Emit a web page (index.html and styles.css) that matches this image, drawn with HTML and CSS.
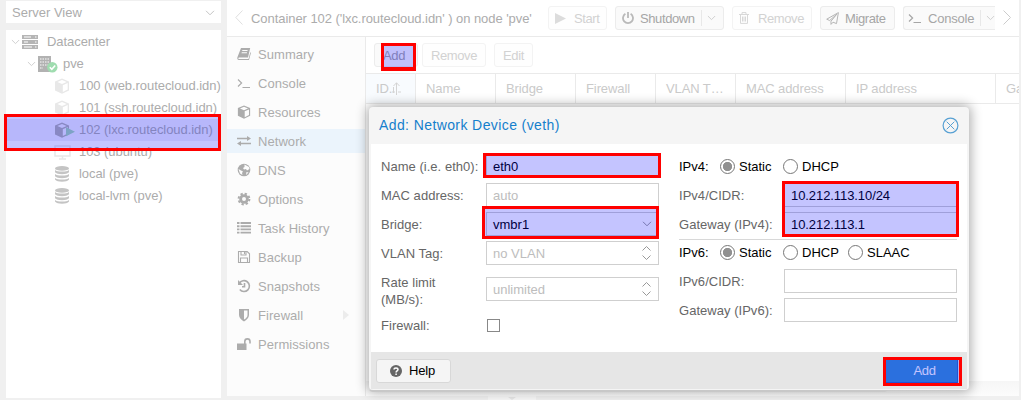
FILE: index.html
```html
<!DOCTYPE html>
<html lang="en">
<head>
<meta charset="utf-8">
<title>Container 102 - Network</title>
<link rel="stylesheet" href="styles.css">
</head>
<body>
<svg class="defs" aria-hidden="true">
  <symbol id="down" viewBox="0 0 10 6"><path d="M1 .8 5 4.8 9 .8" fill="none" stroke="currentColor"/></symbol>
  <symbol id="cube" viewBox="0 0 16 16"><path fill="currentColor" fill-rule="evenodd" d="M8 .6 15 3.4V12.4L8 15.8 1 12.4V3.4ZM8 2 3.4 4 8 6 12.600 4ZM8.800 7.200V13.900L13.700 11.500V5.100Z"/></symbol>
  <symbol id="db" viewBox="0 0 14 16"><g fill="currentColor"><ellipse cx="7" cy="2.400" rx="7" ry="2.400"/><path d="M0 4c2 2 12 2 14 0v2.200c-2 2.600-12 2.600-14 0zM0 8c2 2 12 2 14 0v2.200c-2 2.600-12 2.600-14 0zM0 12c2 2 12 2 14 0v1.500c-2 3-12 3-14 0z"/></g></symbol>
  <symbol id="term" viewBox="0 0 14 14"><path d="M1 3.500 4.600 7 1 10.500M5.500 11.500H13" fill="none" stroke="currentColor" stroke-width="1.200"/></symbol>
</svg>
<div class="app">
  <aside class="side">
    <div class="view">Server View<svg class="chev" width="10" height="6"><use href="#down"/></svg></div>
    <div class="tree">
      <div class="node l0"><svg class="arrow" width="9" height="6" viewBox="0 0 10 6"><use href="#down"/></svg>
        <svg class="ico" width="16" height="14" viewBox="0 0 16 14"><path fill="#b5b5b5" d="M0 0h16v4H0zM0 5h16v4H0zM0 10h16v4H0z"/><path stroke="#fff" d="M2 2h7M2 7h4M2 12h8M13 2h1.500M13 7h1.500M13 12h1.500"/></svg><span>Datacenter</span></div>
      <div class="node l1"><svg class="arrow" width="9" height="6" viewBox="0 0 10 6"><use href="#down"/></svg>
        <svg class="ico" width="20" height="17" viewBox="0 0 20 17"><path fill="#b2b2b2" d="M0 0h13v16H0z"/><path stroke="#e4e4e4" stroke-width="1.300" stroke-dasharray="1.500 1" d="M2 3h9.500M2 6h9.500M2 9h9.500M2 12h3"/><circle cx="14.300" cy="11.300" r="5.200" fill="#9fdcaf"/><path d="m11.800 11.300 2 2 3.400-3.800" fill="none" stroke="#fff" stroke-width="1.600"/></svg><span>pve</span></div>
      <div class="node l2 dim"><svg class="ico" width="16" height="16"><use href="#cube"/></svg><span>100 (web.routecloud.idn)</span></div>
      <div class="node l2 dim"><svg class="ico" width="16" height="16"><use href="#cube"/></svg><span>101 (ssh.routecloud.idn)</span></div>
      <div class="node l2 sel"><svg class="ico run" width="22" height="16" viewBox="0 0 22 16"><use href="#cube" width="16" height="16"/><path fill="#a3d5b4" d="M12 5.200 21 9.700 12 14.200z"/></svg><span>102 (lxc.routecloud.idn)</span></div>
      <div class="node l2 dim"><svg class="ico" width="17" height="15" viewBox="0 0 17 15"><path fill="none" stroke="currentColor" stroke-width="1.500" d="M1 1h15v10H1zM8.500 11v2.500M5 14h7"/></svg><span>103 (ubuntu)</span></div>
      <div class="node l2 store"><svg class="ico" width="14" height="16"><use href="#db"/></svg><span>local (pve)</span></div>
      <div class="node l2 store"><svg class="ico" width="14" height="16"><use href="#db"/></svg><span>local-lvm (pve)</span></div>
    </div>
  </aside>
  <main class="main">
    <header class="head">
      <svg class="back" width="8" height="15" viewBox="0 0 8 15"><path d="M7.500.5.800 7.500l6.700 7" fill="none" stroke="#dfdfdf"/></svg>
      <h1 class="title">Container 102 ('lxc.routecloud.idn' ) on node 'pve'</h1>
      <button class="btn start off"><svg width="11" height="11" viewBox="0 0 11 11"><path fill="#dcdcdc" d="M0 0 11 5.500 0 11z"/></svg>Start</button>
      <button class="btn shut"><svg width="12" height="12" viewBox="0 0 12 12"><path d="M3.400 1.800A5 5 0 1 0 8.600 1.800M6 0v6" fill="none" stroke="#b9b9b9" stroke-width="1.800"/></svg>Shutdown<span class="split"><svg width="9" height="6" viewBox="0 0 10 6"><use href="#down"/></svg></span></button>
      <button class="btn rem off"><svg width="10" height="12" viewBox="0 0 10 12"><path d="M0 2.500h10M3 2V.6h4V2M1.500 3v8.400h7V3M3.500 4.500v5M5 4.500v5M6.500 4.500v5" fill="none" stroke="#d8d8d8"/></svg>Remove</button>
      <button class="btn mig"><svg width="13" height="13" viewBox="0 0 13 13"><path d="M12.400.600.700 7.200 3.700 8.500 10.800 2.200 5 9.200v3.200l2-2.200 3.500 1.400z" fill="none" stroke="#b5b5b5" stroke-linejoin="round"/></svg>Migrate</button>
      <button class="btn con"><svg width="14" height="14"><use href="#term"/></svg>Console<span class="split"><svg width="9" height="6" viewBox="0 0 10 6"><use href="#down"/></svg></span></button>
      <svg class="fwd" width="8" height="15" viewBox="0 0 8 15"><path d="M.5.500 7.500 7.500l-7 7" fill="none" stroke="#ccc"/></svg>
    </header>
    <div class="work">
      <nav class="nav">
        <a class="item"><svg viewBox="0 0 14 14"><path fill="currentColor" fill-rule="evenodd" d="M4 1h9.200L11 10.500H2.200C1 10.500 1 12 2 12H11.500L13.400 5 13.900 6 12 13H2C.300 13 0 11.500.500 10ZM5.400 3 5.100 4H10.400L10.700 3ZM4.800 5.200 4.500 6.200H9.800L10.100 5.200Z"/></svg>Summary</a>
        <a class="item"><svg><use href="#term"/></svg>Console</a>
        <a class="item"><svg><use href="#cube"/></svg>Resources</a>
        <a class="item on"><svg viewBox="0 0 14 14"><path fill="currentColor" d="M0 3.700h10V2l4 2.500L10 7V5.300H0zM14 8.700H4V7L0 9.500 4 12v-1.700h10z"/></svg>Network</a>
        <a class="item"><svg viewBox="0 0 14 14"><circle cx="7" cy="7" r="6.300" fill="currentColor"/><path fill="#fcfcfc" d="M7.500 1.500 12 4 12.500 6 10 7.500 9 6 7 6.500 6 5 7.500 4ZM1.500 6 4 7.500 6 8.500 5 10 5.500 12 3 10.500ZM9.500 9l2 .500L9 12z"/></svg>DNS</a>
        <a class="item"><svg viewBox="0 0 14 14"><circle cx="7" cy="7" r="3.400" fill="none" stroke="currentColor" stroke-width="2.800"/><circle cx="7" cy="7" r="5.400" fill="none" stroke="currentColor" stroke-width="2" stroke-dasharray="2.300 1.941"/></svg>Options</a>
        <a class="item"><svg viewBox="0 0 14 14"><path d="M0 2h2.500M3.500 2H14M0 5.200h2.500M3.500 5.200H14M0 8.400h2.500M3.500 8.400H14M0 11.600h2.500M3.500 11.600H14" stroke="currentColor" stroke-width="1.900"/></svg>Task History</a>
        <a class="item"><svg viewBox="0 0 14 14"><path d="M1.500 1.500h8.700l2.300 2.300v8.700h-11zM4 1.500V5h5V1.500M3.500 12.500V8h7v4.500M7.500 2v2" fill="none" stroke="currentColor" stroke-width="1.100"/></svg>Backup</a>
        <a class="item"><svg viewBox="0 0 14 14"><path d="M2.300 4.400A5.400 5.400 0 1 1 2.800 10.500M7.500 4v3.700H5" fill="none" stroke="currentColor" stroke-width="1.600"/><path fill="currentColor" d="M1 1v5h5z"/></svg>Snapshots</a>
        <a class="item"><svg viewBox="0 0 14 14"><path fill="currentColor" fill-rule="evenodd" d="M2 1H12V7C12 10 9.500 12 7 13.400 4.500 12 2 10 2 7ZM7 2.500V11.600C9 10.400 10.500 9 10.500 7V2.500Z"/></svg>Firewall<svg class="more" viewBox="0 0 6 10"><path fill="#ececec" d="M0 0 6 5 0 10z"/></svg></a>
        <a class="item"><svg viewBox="0 0 14 14"><path fill="currentColor" d="M0 6.500h9.500V13H0z"/><path d="M7.800 7V4.500a2.600 2.600 0 0 1 5.200 0V6.500" fill="none" stroke="currentColor" stroke-width="1.600"/></svg>Permissions</a>
      </nav>
      <section class="content">
        <div class="tools"><button class="btn a">Add</button><button class="btn off r">Remove</button><button class="btn off e">Edit</button></div>
        <div class="cols"><div class="first">ID.<svg width="9" height="13" viewBox="0 0 9 13"><path d="M4.500 13V.800M1.500 4 4.500.800 7.500 4M0 10h3M1.500 5v6M6 10h3" fill="none" stroke="#d4d4d4"/></svg></div><div>Name</div><div>Bridge</div><div>Firewall</div><div>VLAN T…</div><div>MAC address</div><div>IP address</div><div>Gateway</div></div>
        <div class="rows"></div>
        <div class="hscroll"></div>
      </section>
    </div>
    <div class="splitter"><svg width="8" height="3" viewBox="0 0 8 3"><path fill="#e6e6e6" d="M0 0h8L4 3z"/></svg></div>
  </main>
</div>

<div class="under"></div>
<div class="dialog">
  <div class="dhead"><span>Add: Network Device (veth)</span><svg width="17" height="17" viewBox="0 0 17 17"><circle cx="8.500" cy="8.500" r="7.400" fill="none" stroke="#57a0d3" stroke-width="1.200"/><path d="m4.700 4.700 7.600 7.600m0-7.600-7.600 7.600" stroke="#57a0d3"/></svg></div>
  <div class="dbody">
    <div class="form left">
      <div class="row"><label>Name (i.e. eth0):</label><div class="field">eth0</div></div>
      <div class="row"><label>MAC address:</label><div class="field ph">auto</div></div>
      <div class="row"><label>Bridge:</label><div class="field">vmbr1<svg class="drop" width="10" height="6"><use href="#down"/></svg></div></div>
      <div class="row"><label>VLAN Tag:</label><div class="field ph">no VLAN<svg class="spin" width="9" height="16" viewBox="0 0 9 16"><path d="M.5 5.500l4-4 4 4M.5 10.500l4 4 4-4" fill="none" stroke="#999"/></svg></div></div>
      <div class="row tall"><label>Rate limit<br>(MB/s):</label><div class="field ph">unlimited<svg class="spin" width="9" height="16" viewBox="0 0 9 16"><path d="M.5 5.500l4-4 4 4M.5 10.500l4 4 4-4" fill="none" stroke="#999"/></svg></div></div>
      <div class="row"><label>Firewall:</label><div class="check"></div></div>
    </div>
    <div class="form right">
      <div class="radios"><span class="name">IPv4:</span><i class="radio on"></i><span class="o1">Static</span><i class="radio"></i><span>DHCP</span></div>
      <div class="row"><label>IPv4/CIDR:</label><div class="field ip">10.212.113.10/24</div></div>
      <div class="row"><label>Gateway (IPv4):</label><div class="field ip">10.212.113.1</div></div>
      <div class="rule"></div>
      <div class="radios"><span class="name">IPv6:</span><i class="radio on"></i><span class="o1">Static</span><i class="radio"></i><span class="o2">DHCP</span><i class="radio"></i><span>SLAAC</span></div>
      <div class="row"><label>IPv6/CIDR:</label><div class="field"></div></div>
      <div class="row"><label>Gateway (IPv6):</label><div class="field"></div></div>
    </div>
  </div>
  <div class="dfoot">
    <button class="help"><svg width="12" height="12" viewBox="0 0 12 12"><circle cx="6" cy="6" r="6" fill="#666"/><path d="M4 4.600C4 2.300 8 2.300 8 4.600 8 6 6.100 5.900 6.100 7.500M6.100 8.400v1.500" fill="none" stroke="#fff" stroke-width="1.500"/></svg>Help</button>
    <button class="add">Add</button>
  </div>
</div>

<div class="mark m-tree"></div>
<div class="mark m-add"></div>
<div class="mark m-name"></div>
<div class="mark m-bridge"></div>
<div class="mark m-ip"></div>
<div class="mark m-submit"></div>
</body>
</html>
```
FILE: styles.css
```css
* { box-sizing: border-box; }
body { margin: 0; width: 1021px; height: 400px; overflow: hidden; position: relative; background: #f0f0f0; font: 13px/17px "Liberation Sans", Arial, sans-serif; color: #acacac; white-space: nowrap; }
.defs { position: absolute; width: 0; height: 0; }
button { font: inherit; color: inherit; margin: 0; padding: 0; }
svg { display: block; flex: none; }

.app { display: flex; height: 400px; padding-left: 6px; gap: 6px; }
.side { width: 215px; display: flex; flex-direction: column; gap: 7px; padding-top: 1px; }
.view { height: 22px; background: #fff; display: flex; align-items: center; justify-content: space-between; padding: 1px 6px 0; }
.chev { color: #c4c4c4; }
.tree { height: 368px; background: #fff; overflow: hidden; padding-top: 1px; }
.node { height: 22px; display: flex; align-items: center; letter-spacing: -.06px; }
.node .arrow { color: #ccc; margin-right: 2px; }
.node span { margin-top: -1px; }
.ico { margin-right: 9px; }
.l0 { padding-left: 5px; }
.l1 { padding-left: 21px; }
.l1 .ico { margin-right: 5px; }
.l2 { padding-left: 48px; }
.dim .ico { color: #e8e8e8; }
.store .ico { color: #c4c4c4; margin: 0 10px 0 1px; }
.sel { background: #eeeffa; }
.sel .ico { color: #b2b2b2; margin-right: 3px; }
.node:nth-child(6) .ico { margin-right: 8px; }

.main { width: 792px; display: flex; flex-direction: column; }
.head { height: 37px; background: #fff; border-bottom: 1px solid #eaeaea; display: flex; align-items: center; padding: 0 8px; }
.title { margin: 0 0 0 8px; width: 297px; font-size: 13px; font-weight: 400; letter-spacing: -.06px; flex: none; }
.btn { height: 24px; border: 1px solid #ececec; border-radius: 3px; background: #fafafa; display: flex; align-items: center; color: #a6a6a6; flex: none; letter-spacing: -.4px; }
.btn.off { color: #d2d2d2; background: #fefefe; border-color: #f3f3f3; }
.start { width: 59px; padding-left: 6px; gap: 8px; margin-right: 8px; }
.shut { width: 109px; padding-left: 6px; gap: 6px; margin-right: 8px; }
.split { margin-left: auto; height: 16px; width: 22px; border-left: 1px solid #e8e8e8; display: flex; align-items: center; padding-left: 5px; color: #ccc; }
.rem { width: 80px; padding-left: 6px; gap: 9px; margin-right: 8px; }
.mig { width: 75px; padding-left: 5px; gap: 6px; margin-right: 8px; }
.con { width: 92px; padding-left: 4px; gap: 6px; border-right: 0; border-radius: 3px 0 0 3px; letter-spacing: -.2px; }
.con .split { width: 15px; }
.back, .fwd { margin-top: -1px; }
.fwd { margin-left: 8px; }

.work { height: 359px; display: flex; }
.nav { width: 139px; background: #fcfcfc; border-right: 1px solid #eaeaea; padding-top: 5px; display: flex; flex-direction: column; gap: 5px; }
.item { height: 24px; display: flex; align-items: center; padding-left: 10px; gap: 7px; position: relative; letter-spacing: .06px; }
.item svg { width: 14px; height: 14px; }
.item.on { background: #ebf4fc; }
.item svg.more { width: 6px; height: 10px; margin-left: auto; margin-right: 16px; }
.content { width: 653px; background: #fff; display: flex; flex-direction: column; overflow: hidden; }
.tools { height: 36px; display: flex; align-items: center; padding-left: 8px; }
.tools .btn { justify-content: center; }
.tools .a { width: 44px; margin-right: 4px; padding-right: 4px; }
.tools .r { width: 64px; margin-right: 8px; }
.tools .e { width: 39px; }
.cols { height: 31px; flex: none; display: grid; grid-template-columns: 50px 80px 80px 80px 80px 110px 150px 150px; border-top: 1px solid #eaeaea; border-bottom: 1px solid #eaeaea; color: #cacaca; }
.cols div { border-right: 1px solid #eaeaea; padding-left: 10px; display: flex; align-items: center; letter-spacing: -.1px; }
.cols .first { background: #f8fbfe; }
.rows { flex: 1; }
.hscroll { height: 15px; background: linear-gradient(#f6f6f6, #fcfcfc); }
.splitter { width: 48px; height: 4px; margin-left: 261px; background: #f7f7f7; display: flex; justify-content: center; padding-top: 1px; }

.under { position: absolute; left: 369px; top: 360px; width: 519px; height: 32px; border-radius: 4px; background: #c8c8c8; }
.dialog { position: absolute; left: 369px; top: 107px; width: 600px; height: 283px; background: #f5f5f5; border-radius: 4px; box-shadow: 0 0 12px 2px rgba(0,0,0,.32); color: #666; display: flex; flex-direction: column; padding: 0 2px 1px; }
.under { z-index: 1; clip-path: inset(30px 0 0 0); }
.dhead { height: 37px; padding: 0 8px; display: flex; align-items: center; justify-content: space-between; color: #157fcc; }
.dhead span { font-size: 14px; letter-spacing: .4px; }
.dbody { height: 208px; background: #fff; padding: 10px; display: flex; gap: 20px; }
.form { width: 278px; display: flex; flex-direction: column; gap: 5px; }
.row { height: 24px; display: flex; align-items: center; justify-content: space-between; }
.row label { letter-spacing: .03px; }
.tall { height: 38px; margin-top: 2px; }
.field { width: 173px; height: 24px; border: 1px solid #cfcfcf; padding-left: 6px; display: flex; align-items: center; color: #000; background: #fff; }
.tall .field { margin-top: -4px; }
.ph, .tall .ph { color: #bdbdbd; }
.ip { letter-spacing: -.08px; }
.drop { margin-left: auto; margin-right: 6px; color: #999; }
.spin { margin-left: auto; margin-right: 7px; }
.check { width: 13px; height: 13px; border: 1px solid #888; margin-right: 159px; }
.left .row:last-child { margin-top: -2px; }
.radios { height: 24px; display: flex; align-items: center; color: #000; }
.radios .name { width: 41px; }
.radio { width: 15px; height: 15px; border: 1px solid #777; border-radius: 50%; display: block; margin-right: 4px; }
.radio.on { background: radial-gradient(circle, #919191 4.3px, #fff 5px); }
.o1 { width: 44px; }
.o2 { width: 46px; }
.rule { height: 1px; background: #d8d8d8; margin: -2px 0 -5px; }
.dfoot { height: 37px; background: #e6e6e6; display: flex; align-items: center; justify-content: space-between; padding: 0 9px 0 5px; }
.help { width: 75px; height: 24px; border: 1px solid #d8d8d8; border-radius: 3px; background: #f5f5f5; color: #000; display: flex; align-items: center; gap: 7px; padding-left: 13px; letter-spacing: -.2px; }
.add { width: 73px; height: 24px; border: 1px solid #2a6bc8; background: #3892d4; color: #fff; padding-left: 6px; letter-spacing: -.4px; }

.mark { position: absolute; border: 3px solid #f00; background: rgba(0,0,255,.23); }
.m-tree { left: 4px; top: 114px; width: 217px; height: 37px; }
.m-add { left: 381px; top: 43px; width: 35px; height: 28px; border-bottom-width: 4px; }
.m-name { left: 483px; top: 153px; width: 178px; height: 25px; }
.m-bridge { left: 482px; top: 206px; width: 177px; height: 33px; }
.m-ip { left: 782px; top: 181px; width: 177px; height: 56px; }
.m-submit { left: 883px; top: 357px; width: 79px; height: 29px; }
```
